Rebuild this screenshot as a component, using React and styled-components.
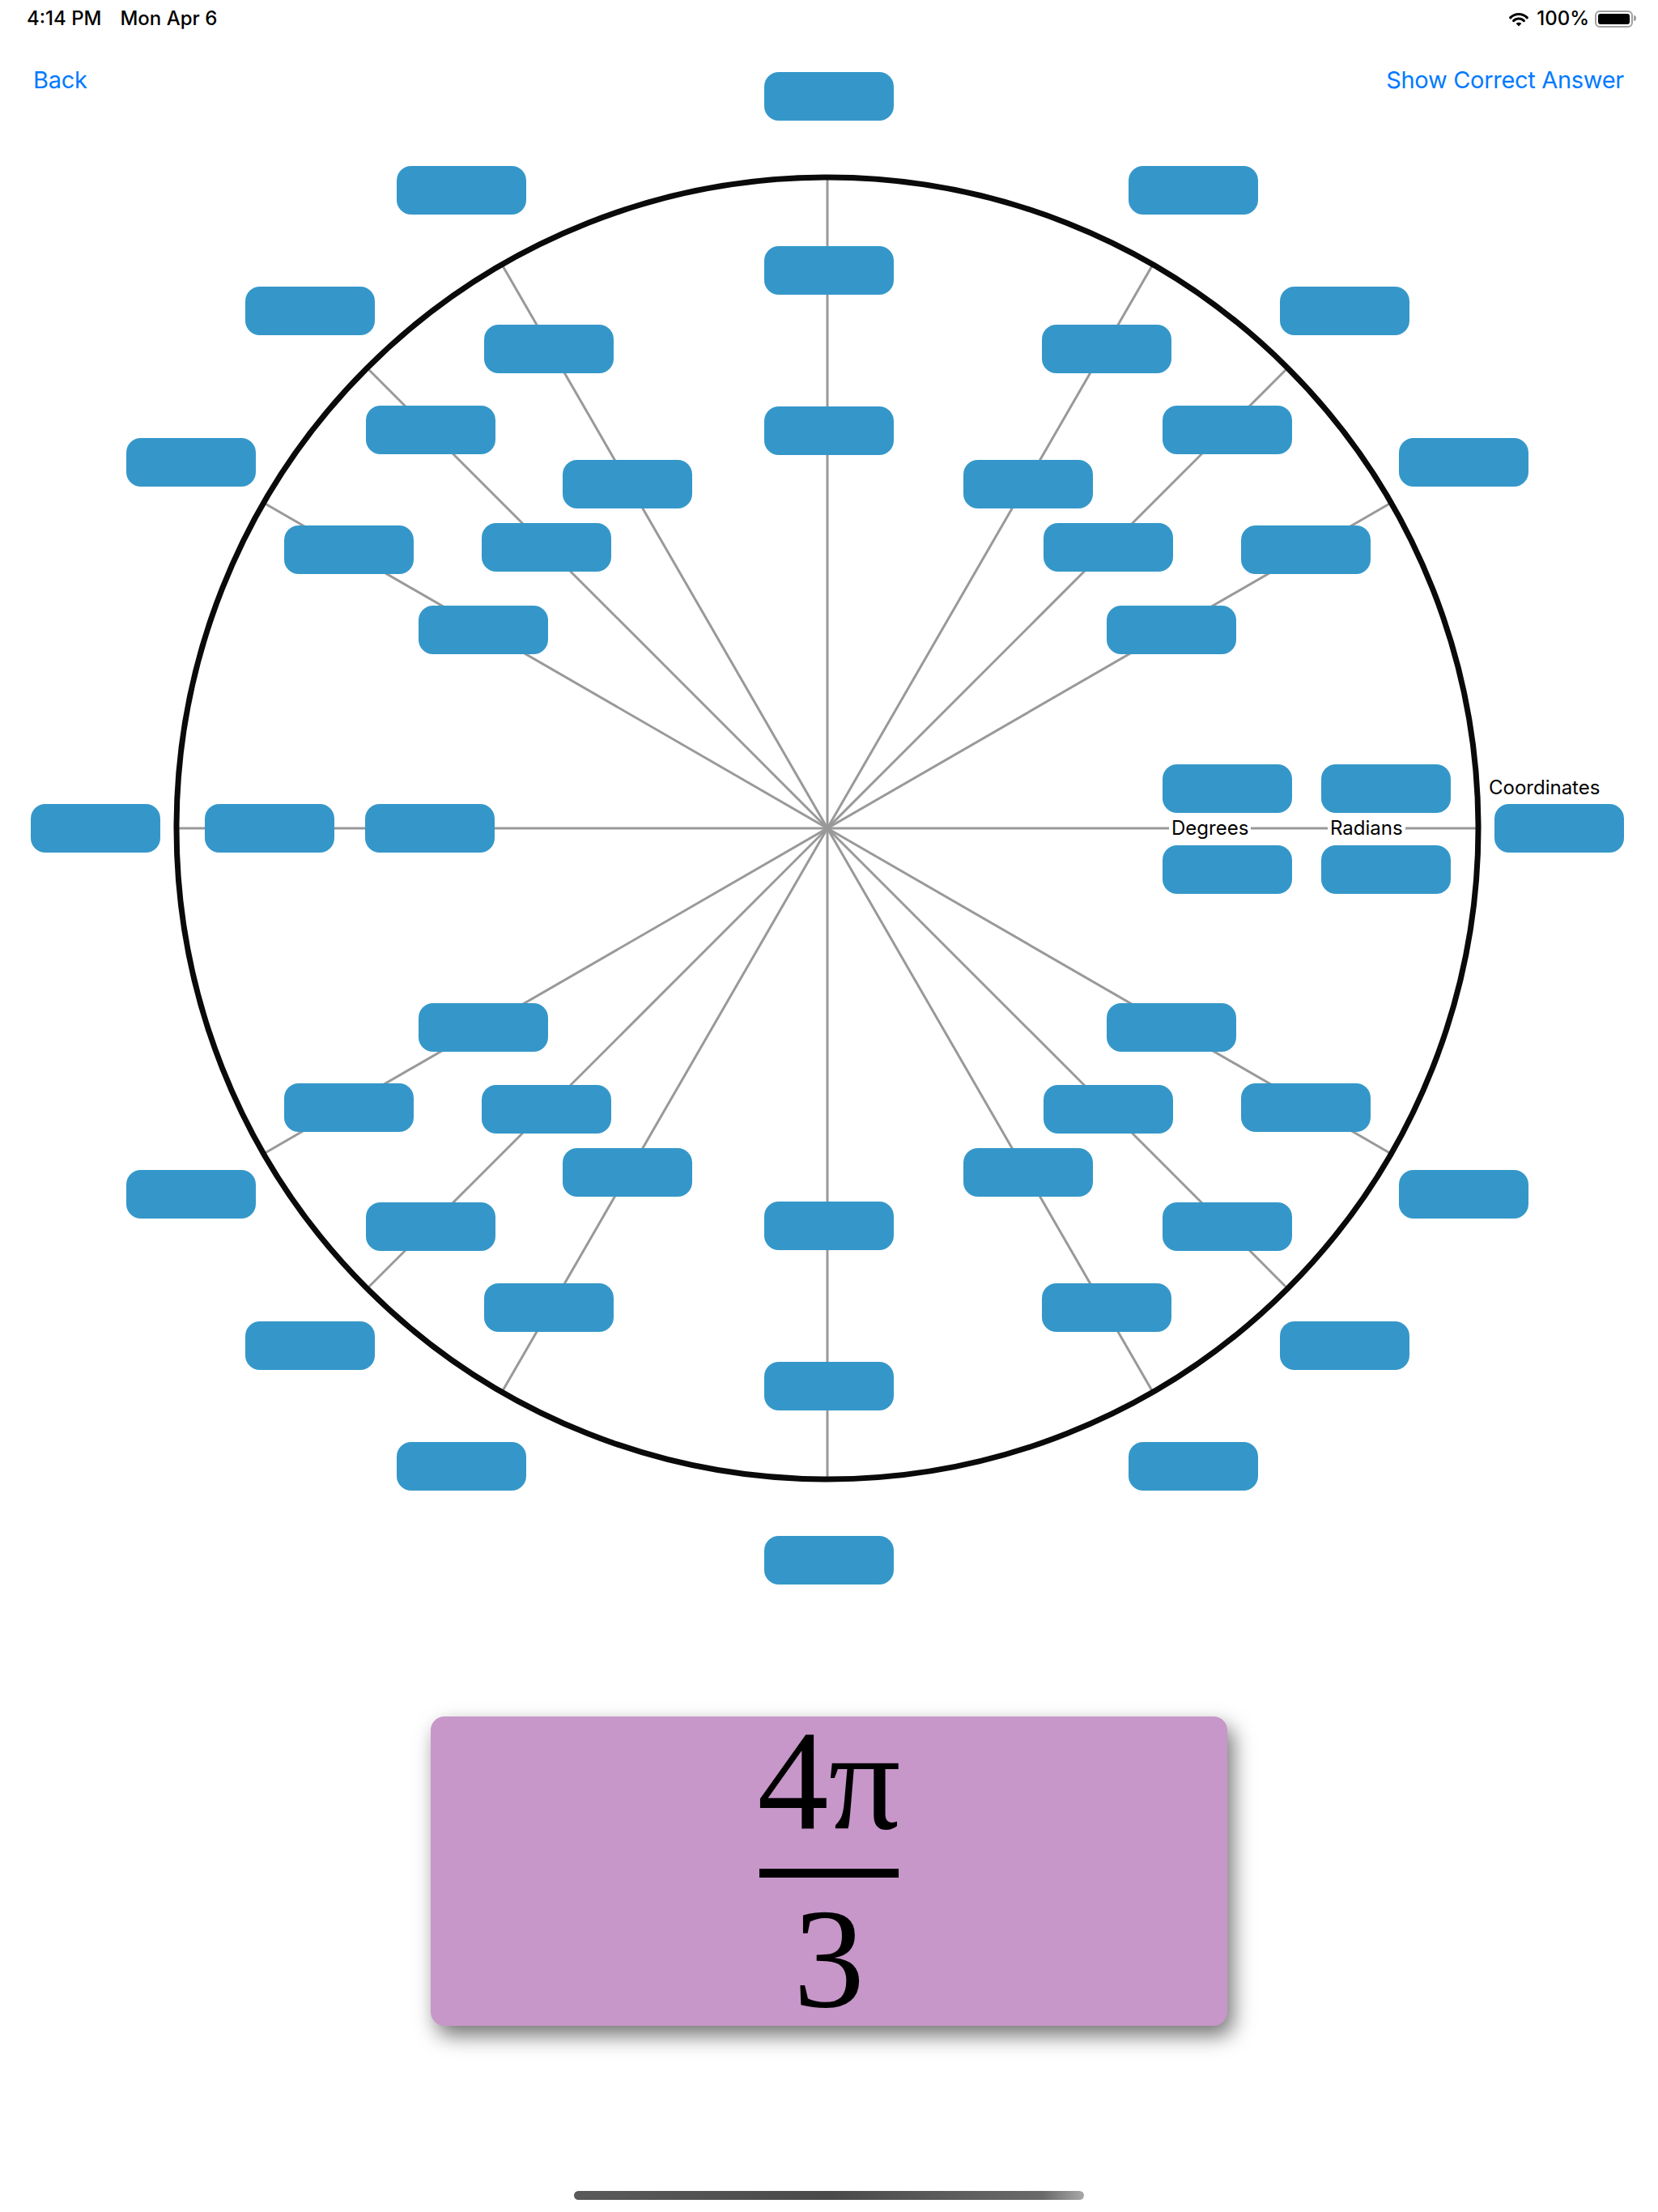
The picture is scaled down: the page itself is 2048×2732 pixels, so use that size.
import React from 'react';
import styled, { createGlobalStyle } from 'styled-components';

const GlobalStyle = createGlobalStyle`
  html, body {
    margin: 0;
    padding: 0;
    background: #ffffff;
  }
  body {
    font-family: Inter, "Noto Sans", "Liberation Sans", sans-serif;
    color: #000;
  }
`;

// page coordinates of the circle centre
const CX = 1022;
const CY = 1023;
const CIRCLE_R = 804;
const STATUS_H = 46;

const ANGLES = [0, 30, 45, 60, 90, 120, 135, 150, 180, 210, 225, 240, 270, 300, 315, 330];
const RINGS = [491, 689, 904];
const BOX_W = 160;
const BOX_H = 60;

// hand nudges per ring, measured in the first quadrant: [outward x, outward y]
const NUDGE = {
  30: [[0, 0], [-6, 0], [3, 0]],
  45: [[0, 0], [7, 5], [0, 0]],
  60: [[2, 0], [0, -5], [0, 5]],
};

const Screen = styled.div`
  width: 2048px;
  height: 2732px;
  display: flex;
  flex-direction: column;
  overflow: hidden;
`;

const StatusBar = styled.div`
  height: ${STATUS_H}px;
  display: flex;
  align-items: center;
  justify-content: space-between;
  padding: 0 27px 0 33px;
  font-size: 24px;
  font-weight: 500;
  line-height: ${STATUS_H}px;
`;

const StatusLeft = styled.div`
  display: flex;
  gap: 23px;
`;

const StatusRight = styled.div`
  display: flex;
  align-items: center;
  gap: 9px;
`;

const Battery = styled.div`
  position: relative;
  width: 39px;
  height: 13px;
  border: 2px solid #a0a0a0;
  border-radius: 6px;
  padding: 2px;
  box-sizing: content-box;
  margin-left: -2px;
  margin-right: 4px;
  &:before {
    content: '';
    display: block;
    width: 100%;
    height: 100%;
    background: #000;
    border-radius: 3px;
  }
  &:after {
    content: '';
    position: absolute;
    right: -6px;
    top: 4px;
    width: 3px;
    height: 7px;
    background: #a0a0a0;
    border-radius: 0 3px 3px 0;
  }
`;

const Diagram = styled.div`
  position: relative;
  height: ${2000 - STATUS_H}px;
  flex-shrink: 0;
`;

const Wheel = styled.svg`
  position: absolute;
  left: 0;
  top: 0;
`;

const NavBar = styled.div`
  position: absolute;
  left: 0;
  right: 0;
  top: 35px;
  display: flex;
  justify-content: space-between;
  padding: 0 42px 0 41px;
  z-index: 2;
`;

const NavButton = styled.span`
  font-size: 29px;
  line-height: 36px;
  letter-spacing: -0.3px;
  color: #007aff;
`;

const Slot = styled.div`
  position: absolute;
  width: ${BOX_W}px;
  height: ${BOX_H}px;
  border-radius: 18px;
  background: #3597c9;
`;

const Label = styled.span`
  position: absolute;
  font-size: 24px;
  line-height: 28px;
  padding: 0 3px;
  background: ${p => (p.$plain ? 'transparent' : '#fff')};
  white-space: nowrap;
`;

const CardArea = styled.div`
  display: flex;
  justify-content: center;
  padding-top: 120px;
`;

const Card = styled.div`
  width: 984px;
  height: 382px;
  box-sizing: border-box;
  padding-top: 9px;
  border-radius: 17px;
  background: #c797c9;
  box-shadow: 7px 12px 26px rgba(0, 0, 0, 0.55);
  display: flex;
  flex-direction: column;
  align-items: center;
  font-family: "Liberation Serif", "Times New Roman", serif;
  font-size: 176px;
  line-height: 140px;
  color: #000;
`;

const Numerator = styled.div`
  height: 140px;
`;

const FractionBar = styled.div`
  width: 172px;
  height: 11px;
  margin-top: 39px;
  background: #000;
`;

const Denominator = styled.div`
  height: 140px;
  margin-top: 30px;
`;

const HomeIndicator = styled.div`
  margin: auto auto 15px;
  width: 630px;
  height: 11px;
  border-radius: 6px;
  background: linear-gradient(90deg, #5a5a5a 0%, #4a4a4a 50%, #6a6a6a 92%, #a8a8a8 100%);
`;

const WifiIcon = () => (
  <svg width="26" height="20" viewBox="0 0 26 20">
    <g fill="none" stroke="#000" strokeWidth="3.2" strokeLinecap="round">
      <path d="M2.75 8.75 A14.5 14.5 0 0 1 23.25 8.75" />
      <path d="M6.64 12.64 A9 9 0 0 1 19.36 12.64" />
    </g>
    <path d="M13 19.5 L9.6 16.1 A4.8 4.8 0 0 1 16.4 16.1 Z" fill="#000" />
  </svg>
);

const rad = a => (a * Math.PI) / 180;

const buildSlots = () => {
  const slots = [];
  ANGLES.forEach(a => {
    const c = Math.cos(rad(a));
    const s = Math.sin(rad(a));
    const base = [30, 45, 60].find(b => Math.abs(Math.abs(c) - Math.cos(rad(b))) < 1e-6);
    RINGS.forEach((r, i) => {
      if (a === 0 && i < 2) return;
      let x = CX + r * c;
      let y = CY - r * s;
      if (base) {
        const [nx, ny] = NUDGE[base][i];
        x += nx * Math.sign(c);
        y -= ny * Math.sign(s);
      }
      // the left-hand 45° radian slots sit a little closer in
      if ((a === 135 || a === 225) && i === 1) x += 4;
      if (a === 90 || a === 270) x += 2;
      slots.push({ key: `${a}-${i}`, x, y });
    });
  });
  // legend pairs on the 0° spoke
  [1515.5, 1712].forEach((x, i) => {
    slots.push({ key: `legend-${i}-a`, x, y: 973.5 });
    slots.push({ key: `legend-${i}-b`, x, y: 1073.5 });
  });
  return slots;
};

const slots = buildSlots();

export default function App() {
  const oy = CY - STATUS_H;
  return (
    <Screen>
      <GlobalStyle />
      <StatusBar>
        <StatusLeft>
          <span>4:14 PM</span>
          <span>Mon Apr 6</span>
        </StatusLeft>
        <StatusRight>
          <WifiIcon />
          <span>100%</span>
          <Battery />
        </StatusRight>
      </StatusBar>

      <Diagram>
        <NavBar>
          <NavButton>Back</NavButton>
          <NavButton>Show Correct Answer</NavButton>
        </NavBar>

        <Wheel width="2048" height={2000 - STATUS_H}>
          <g stroke="#999" strokeWidth="3">
            {ANGLES.map(a => (
              <line
                key={a}
                x1={CX}
                y1={oy}
                x2={CX + CIRCLE_R * Math.cos(rad(a))}
                y2={oy - CIRCLE_R * Math.sin(rad(a))}
              />
            ))}
          </g>
          <circle cx={CX} cy={oy} r={CIRCLE_R} fill="none" stroke="#0a0a0a" strokeWidth="7" />
        </Wheel>

        {slots.map(s => (
          <Slot
            key={s.key}
            style={{ left: s.x - BOX_W / 2, top: s.y - STATUS_H - BOX_H / 2 }}
          />
        ))}

        <Label style={{ left: 1444, top: CY - STATUS_H - 14 }}>Degrees</Label>
        <Label style={{ left: 1640, top: CY - STATUS_H - 14 }}>Radians</Label>
        <Label $plain style={{ left: 1836, top: 982 - STATUS_H - 23 }}>Coordinates</Label>
      </Diagram>

      <CardArea>
        <Card>
          <Numerator>4π</Numerator>
          <FractionBar />
          <Denominator>3</Denominator>
        </Card>
      </CardArea>

      <HomeIndicator />
    </Screen>
  );
}
